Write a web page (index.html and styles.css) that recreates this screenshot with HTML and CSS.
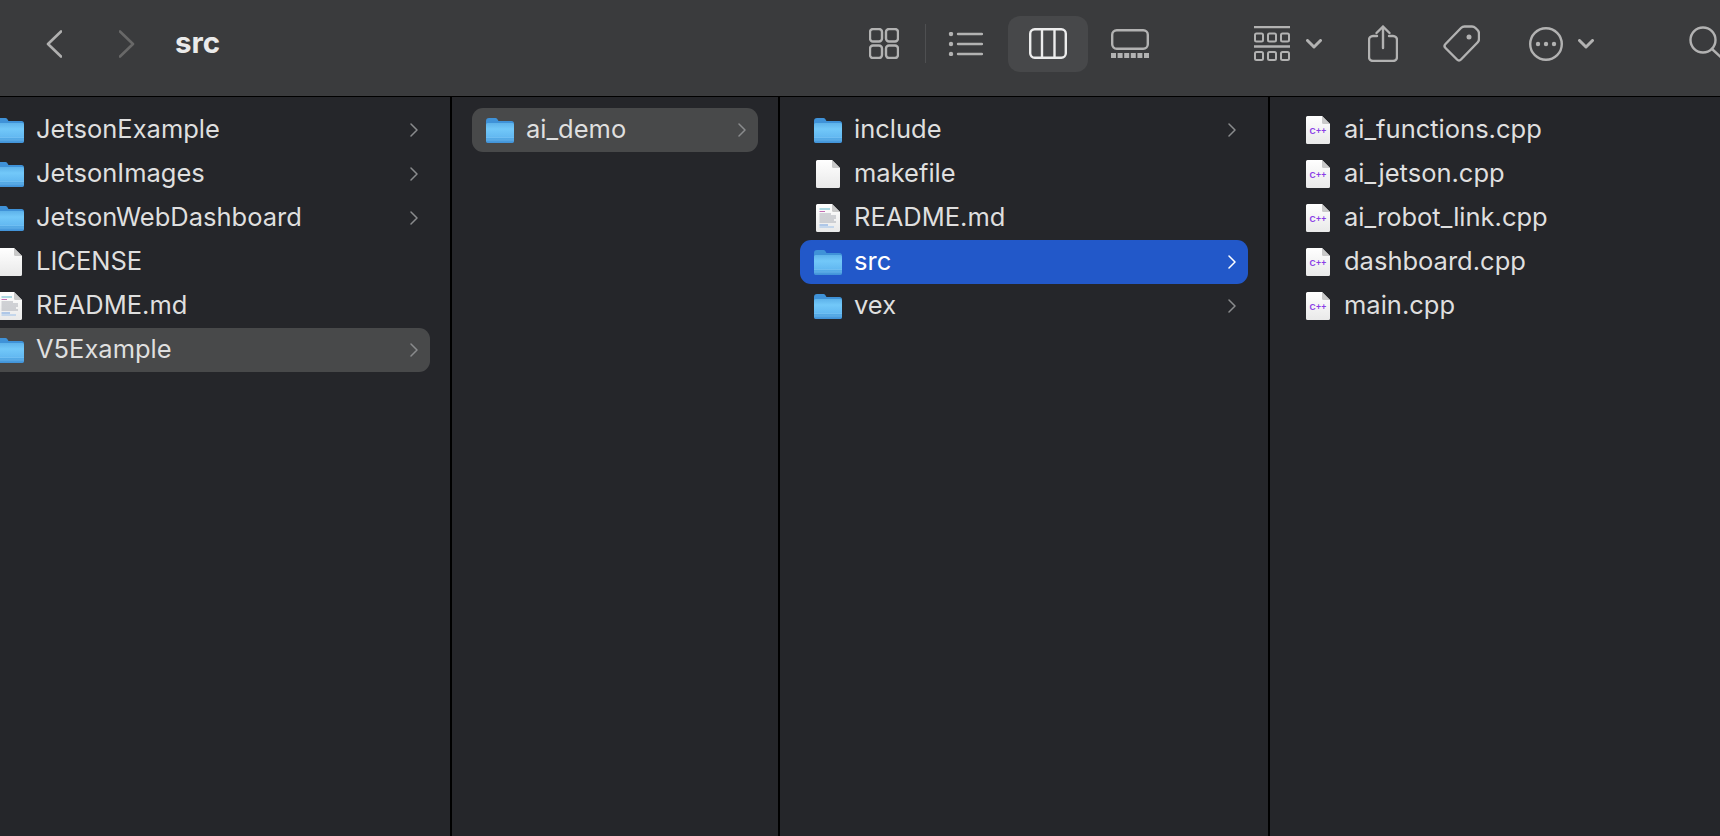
FILE: index.html
```html
<!DOCTYPE html>
<html lang="en">
<head>
  <meta charset="UTF-8" />
  <title>src</title>
  <link rel="stylesheet" href="styles.css">
</head>
<body>
  <svg class="defs" width="0" height="0">
    <defs>
      <linearGradient id="folderBody" x1="0" y1="0" x2="0" y2="1">
        <stop offset="0" stop-color="#5db2ea" />
        <stop offset="0.3" stop-color="#72c8f9" />
        <stop offset="0.72" stop-color="#62b8f1" />
        <stop offset="0.78" stop-color="#52a8e5" />
        <stop offset="1" stop-color="#4192d8" />
      </linearGradient>
      <linearGradient id="pageBody" x1="0" y1="0" x2="0" y2="1">
        <stop offset="0" stop-color="#ffffff" />
        <stop offset="1" stop-color="#e9e9e9" />
      </linearGradient>
      <symbol id="folder" viewBox="0 0 28 26">
        <path d="M0 4a3 3 0 0 1 3-3h6.500a2 2 0 0 1 1.600.8L12.500 4H25.500A2.500 2.500 0 0 1 28 6.500V23.500A2.500 2.500 0 0 1 25.500 26H2.500A2.500 2.500 0 0 1 0 23.500Z" fill="#3f92d8" />
        <path d="M0 7.500A1.500 1.500 0 0 1 1.500 6H26.500A1.500 1.500 0 0 1 28 7.500V23.500A2.500 2.500 0 0 1 25.500 26H2.500A2.500 2.500 0 0 1 0 23.500Z" fill="url(#folderBody)" />
        <path d="M0 20.500H28M0 23H28" stroke="#8accf6" stroke-width="0.6" opacity="0.6" />
      </symbol>
      <symbol id="page" viewBox="0 0 24 28">
        <path d="M1.500 0H16L24 8V26.500A1.500 1.500 0 0 1 22.500 28H1.500A1.500 1.500 0 0 1 0 26.500V1.500A1.500 1.500 0 0 1 1.500 0Z" fill="url(#pageBody)" />
        <path d="M16 0L24 8H17.500A1.500 1.500 0 0 1 16 6.500Z" fill="#c9c9c9" />
      </symbol>
      <symbol id="readme" viewBox="0 0 24 28">
        <use href="#page" width="24" height="28" />
        <path d="M3.500 5H14" stroke="#5fb4c8" stroke-width="1" />
        <path d="M3.500 7.500H9" stroke="#c46fb4" stroke-width="1" />
        <path d="M3.500 10H15M3.500 12H20M3.500 14H20M3.500 16H18M3.500 18H20" stroke="#a9acb4" stroke-width="1" />
        <path d="M3.500 21H12" stroke="#6f9fe0" stroke-width="1" />
        <path d="M3.500 23H18" stroke="#9cc0ea" stroke-width="1" />
      </symbol>
      <symbol id="chevron-right" viewBox="0 0 8 14">
        <path d="M1 1L7 7L1 13" fill="none" stroke="currentColor" stroke-width="1.500" stroke-linecap="round" stroke-linejoin="round" />
      </symbol>
    </defs>
  </svg>

  <header class="toolbar">
    <div class="nav">
      <svg class="ico back" width="16" height="28" viewBox="0 0 16 28"><path d="M15 1.500L2 14L15 26.500" /></svg>
      <svg class="ico forward" width="16" height="28" viewBox="0 0 16 28"><path d="M1 1.500L14 14L1 26.500" /></svg>
      <span class="title">src</span>
    </div>

    <svg class="ico t-grid" width="30" height="31" viewBox="0 0 30 31">
      <rect x="1" y="1" width="12" height="12.500" rx="3" /><rect x="17" y="1" width="12" height="12.500" rx="3" />
      <rect x="1" y="17.500" width="12" height="12.500" rx="3" /><rect x="17" y="17.500" width="12" height="12.500" rx="3" />
    </svg>
    <span class="sep"></span>
    <svg class="ico t-list" width="35" height="24" viewBox="0 0 35 24">
      <path d="M10 2H34M10 12H34M10 22H34" />
      <circle class="dot" cx="3" cy="2" r="2.200" /><circle class="dot" cx="3" cy="12" r="2.200" /><circle class="dot" cx="3" cy="22" r="2.200" />
    </svg>
    <span class="view-on">
      <svg class="ico active" width="38" height="31" viewBox="0 0 38 31">
        <rect x="1.200" y="1.200" width="35.600" height="28.600" rx="4.500" /><path d="M13 1.200V29.800M25.500 1.200V29.800" />
      </svg>
    </span>
    <svg class="ico t-gallery" width="38" height="29" viewBox="0 0 38 29">
      <rect x="1.200" y="1.200" width="35.600" height="18.600" rx="4.500" />
      <g class="dot"><rect x="0" y="24" width="5" height="5" /><rect x="6.600" y="24" width="5" height="5" /><rect x="13.200" y="24" width="5" height="5" /><rect x="19.800" y="24" width="5" height="5" /><rect x="26.400" y="24" width="5" height="5" /><rect x="33" y="24" width="5" height="5" /></g>
    </svg>

    <svg class="ico t-group" width="36" height="35" viewBox="0 0 36 35">
      <path d="M0 1H36M0 20.500H36" />
      <g class="thin">
        <rect x="1" y="7.500" width="8" height="8" rx="1.500" /><rect x="14" y="7.500" width="8" height="8" rx="1.500" /><rect x="27" y="7.500" width="8" height="8" rx="1.500" />
        <rect x="1" y="26" width="8" height="8" rx="1.500" /><rect x="14" y="26" width="8" height="8" rx="1.500" /><rect x="27" y="26" width="8" height="8" rx="1.500" />
      </g>
    </svg>
    <svg class="ico caret t-caret" width="16" height="10" viewBox="0 0 16 10"><path d="M1.500 1.500L8 8L14.500 1.500" /></svg>
    <svg class="ico t-share" width="30" height="37" viewBox="0 0 30 37">
      <path d="M9 11H5A4 4 0 0 0 1 15V32A4 4 0 0 0 5 36H25A4 4 0 0 0 29 32V15A4 4 0 0 0 25 11H21" />
      <path d="M15 1.500V23M8.500 8L15 1.500L21.500 8" />
    </svg>
    <svg class="ico t-tag" width="37" height="37" viewBox="0 0 37 37">
      <path d="M21.500 1.500H29Q31 1.500 32.500 3L34.500 5Q36 6.500 36 8.500V14Q36 16 34.500 17.500L18 34.500Q16 36.500 14 34.500L2.500 23Q0.500 21 2.500 19L18 3Q19.500 1.500 21.500 1.500Z" />
      <circle class="dot" cx="26" cy="12" r="2.500" />
    </svg>
    <svg class="ico t-more" width="34" height="34" viewBox="0 0 34 34">
      <circle cx="17" cy="17" r="15.800" />
      <circle class="dot" cx="9" cy="17" r="2.200" /><circle class="dot" cx="17" cy="17" r="2.200" /><circle class="dot" cx="25" cy="17" r="2.200" />
    </svg>
    <svg class="ico caret t-caret2" width="16" height="10" viewBox="0 0 16 10"><path d="M1.500 1.500L8 8L14.500 1.500" /></svg>
    <svg class="ico t-search" width="38" height="36" viewBox="0 0 38 36">
      <circle cx="14" cy="14" r="12.500" /><path d="M23 23L36 35" />
    </svg>
  </header>

  <main class="columns">
    <section class="col col-first">
      <div class="row"><svg class="icon"><use href="#folder" /></svg><span class="name">JetsonExample</span><svg class="arrow"><use href="#chevron-right" /></svg></div>
      <div class="row"><svg class="icon"><use href="#folder" /></svg><span class="name">JetsonImages</span><svg class="arrow"><use href="#chevron-right" /></svg></div>
      <div class="row"><svg class="icon"><use href="#folder" /></svg><span class="name">JetsonWebDashboard</span><svg class="arrow"><use href="#chevron-right" /></svg></div>
      <div class="row"><svg class="doc"><use href="#page" /></svg><span class="name">LICENSE</span></div>
      <div class="row"><svg class="doc"><use href="#readme" /></svg><span class="name">README.md</span></div>
      <div class="row open"><svg class="icon"><use href="#folder" /></svg><span class="name">V5Example</span><svg class="arrow"><use href="#chevron-right" /></svg></div>
    </section>

    <section class="col col-second">
      <div class="row open"><svg class="icon"><use href="#folder" /></svg><span class="name">ai_demo</span><svg class="arrow"><use href="#chevron-right" /></svg></div>
    </section>

    <section class="col col-third">
      <div class="row"><svg class="icon"><use href="#folder" /></svg><span class="name">include</span><svg class="arrow"><use href="#chevron-right" /></svg></div>
      <div class="row"><svg class="doc"><use href="#page" /></svg><span class="name">makefile</span></div>
      <div class="row"><svg class="doc"><use href="#readme" /></svg><span class="name">README.md</span></div>
      <div class="row selected"><svg class="icon"><use href="#folder" /></svg><span class="name">src</span><svg class="arrow"><use href="#chevron-right" /></svg></div>
      <div class="row"><svg class="icon"><use href="#folder" /></svg><span class="name">vex</span><svg class="arrow"><use href="#chevron-right" /></svg></div>
    </section>

    <section class="col col-last">
      <div class="row"><svg class="doc" viewBox="0 0 24 28"><use href="#page" width="24" height="28" /><text class="cpp" x="12" y="18" text-anchor="middle">C++</text></svg><span class="name">ai_functions.cpp</span></div>
      <div class="row"><svg class="doc" viewBox="0 0 24 28"><use href="#page" width="24" height="28" /><text class="cpp" x="12" y="18" text-anchor="middle">C++</text></svg><span class="name">ai_jetson.cpp</span></div>
      <div class="row"><svg class="doc" viewBox="0 0 24 28"><use href="#page" width="24" height="28" /><text class="cpp" x="12" y="18" text-anchor="middle">C++</text></svg><span class="name">ai_robot_link.cpp</span></div>
      <div class="row"><svg class="doc" viewBox="0 0 24 28"><use href="#page" width="24" height="28" /><text class="cpp" x="12" y="18" text-anchor="middle">C++</text></svg><span class="name">dashboard.cpp</span></div>
      <div class="row"><svg class="doc" viewBox="0 0 24 28"><use href="#page" width="24" height="28" /><text class="cpp" x="12" y="18" text-anchor="middle">C++</text></svg><span class="name">main.cpp</span></div>
    </section>
  </main>
</body>
</html>
```

FILE: styles.css
```css
html, body {
  height: 100%;
}
body {
  margin: 0;
  background-color: #25262a;
  color: #dfdfdf;
  font-family: 'Inter', 'Liberation Sans', sans-serif;
  overflow: hidden;
  display: flex;
  flex-direction: column;
}
.defs {
  position: absolute;
}

/* toolbar */
.toolbar {
  flex: none;
  display: flex;
  align-items: center;
  box-sizing: border-box;
  height: 97px;
  padding-bottom: 9px;
  background-color: #3a3b3d;
  border-bottom: 1px solid #000;
}
.ico {
  flex: none;
  fill: none;
  stroke: #b2b2b2;
  stroke-width: 2.4;
  stroke-linecap: round;
  stroke-linejoin: round;
}
.ico .dot {
  fill: #b2b2b2;
  stroke: none;
}
.ico .thin {
  stroke-width: 2;
}
.ico.active {
  stroke: #ececec;
}
.ico.caret {
  stroke-width: 3;
}
.nav {
  flex: none;
  width: 869px;
  display: flex;
  align-items: center;
  box-sizing: border-box;
  padding-left: 46px;
}
.back {
  stroke: #b0b0b0;
  stroke-width: 2.6;
}
.forward {
  margin-left: 57px;
  stroke: #686868;
  stroke-width: 2.6;
}
.title {
  margin: 0 0 3px 40px;
  font-size: 29.500px;
  font-weight: 700;
  color: #eaeaea;
}
.sep {
  flex: none;
  width: 1px;
  height: 39px;
  margin-left: 26px;
  background-color: #4e4f51;
}
.t-list {
  margin-left: 22px;
}
.view-on {
  flex: none;
  display: flex;
  align-items: center;
  justify-content: center;
  width: 80px;
  height: 56px;
  margin-left: 25px;
  background-color: #47484a;
  border-radius: 12px;
}
.t-gallery {
  margin-left: 23px;
}
.t-group {
  margin-left: 105px;
}
.t-caret {
  margin-left: 16px;
}
.t-share {
  margin-left: 46px;
}
.t-tag {
  margin-left: 45px;
}
.t-more {
  margin-left: 49px;
}
.t-caret2 {
  margin-left: 15px;
}
.t-search {
  margin-left: 95px;
}

/* browser columns */
.columns {
  flex: 1;
  display: flex;
  min-height: 0;
}
.col {
  flex: none;
  box-sizing: border-box;
  padding: 11px 20px 0;
  border-right: 2px solid #000;
}
.col-first {
  width: 490px;
  margin-left: -38px;
}
.col-second {
  width: 328px;
}
.col-third {
  width: 490px;
}
.col-last {
  flex: 1;
  border-right: none;
}
.row {
  display: flex;
  align-items: center;
  height: 44px;
  padding: 0 12px 0 14px;
  border-radius: 11px;
}
.row.open {
  background-color: #48494a;
}
.row.selected {
  background-color: #2258c9;
  color: #fff;
}
.icon {
  flex: none;
  width: 28px;
  height: 26px;
}
.doc {
  flex: none;
  width: 24px;
  height: 28px;
  margin: 0 2px;
}
.cpp {
  fill: #8a3de6;
  font-family: 'Liberation Sans', sans-serif;
  font-size: 8.500px;
  font-weight: 700;
  letter-spacing: 0.3px;
}
.name {
  flex: 1;
  margin: 0 0 4px 12px;
  font-size: 25.500px;
  white-space: nowrap;
}
.arrow {
  flex: none;
  width: 8px;
  height: 14px;
  color: #8a8b8d;
}
.row.selected .arrow {
  color: #fff;
}
```
